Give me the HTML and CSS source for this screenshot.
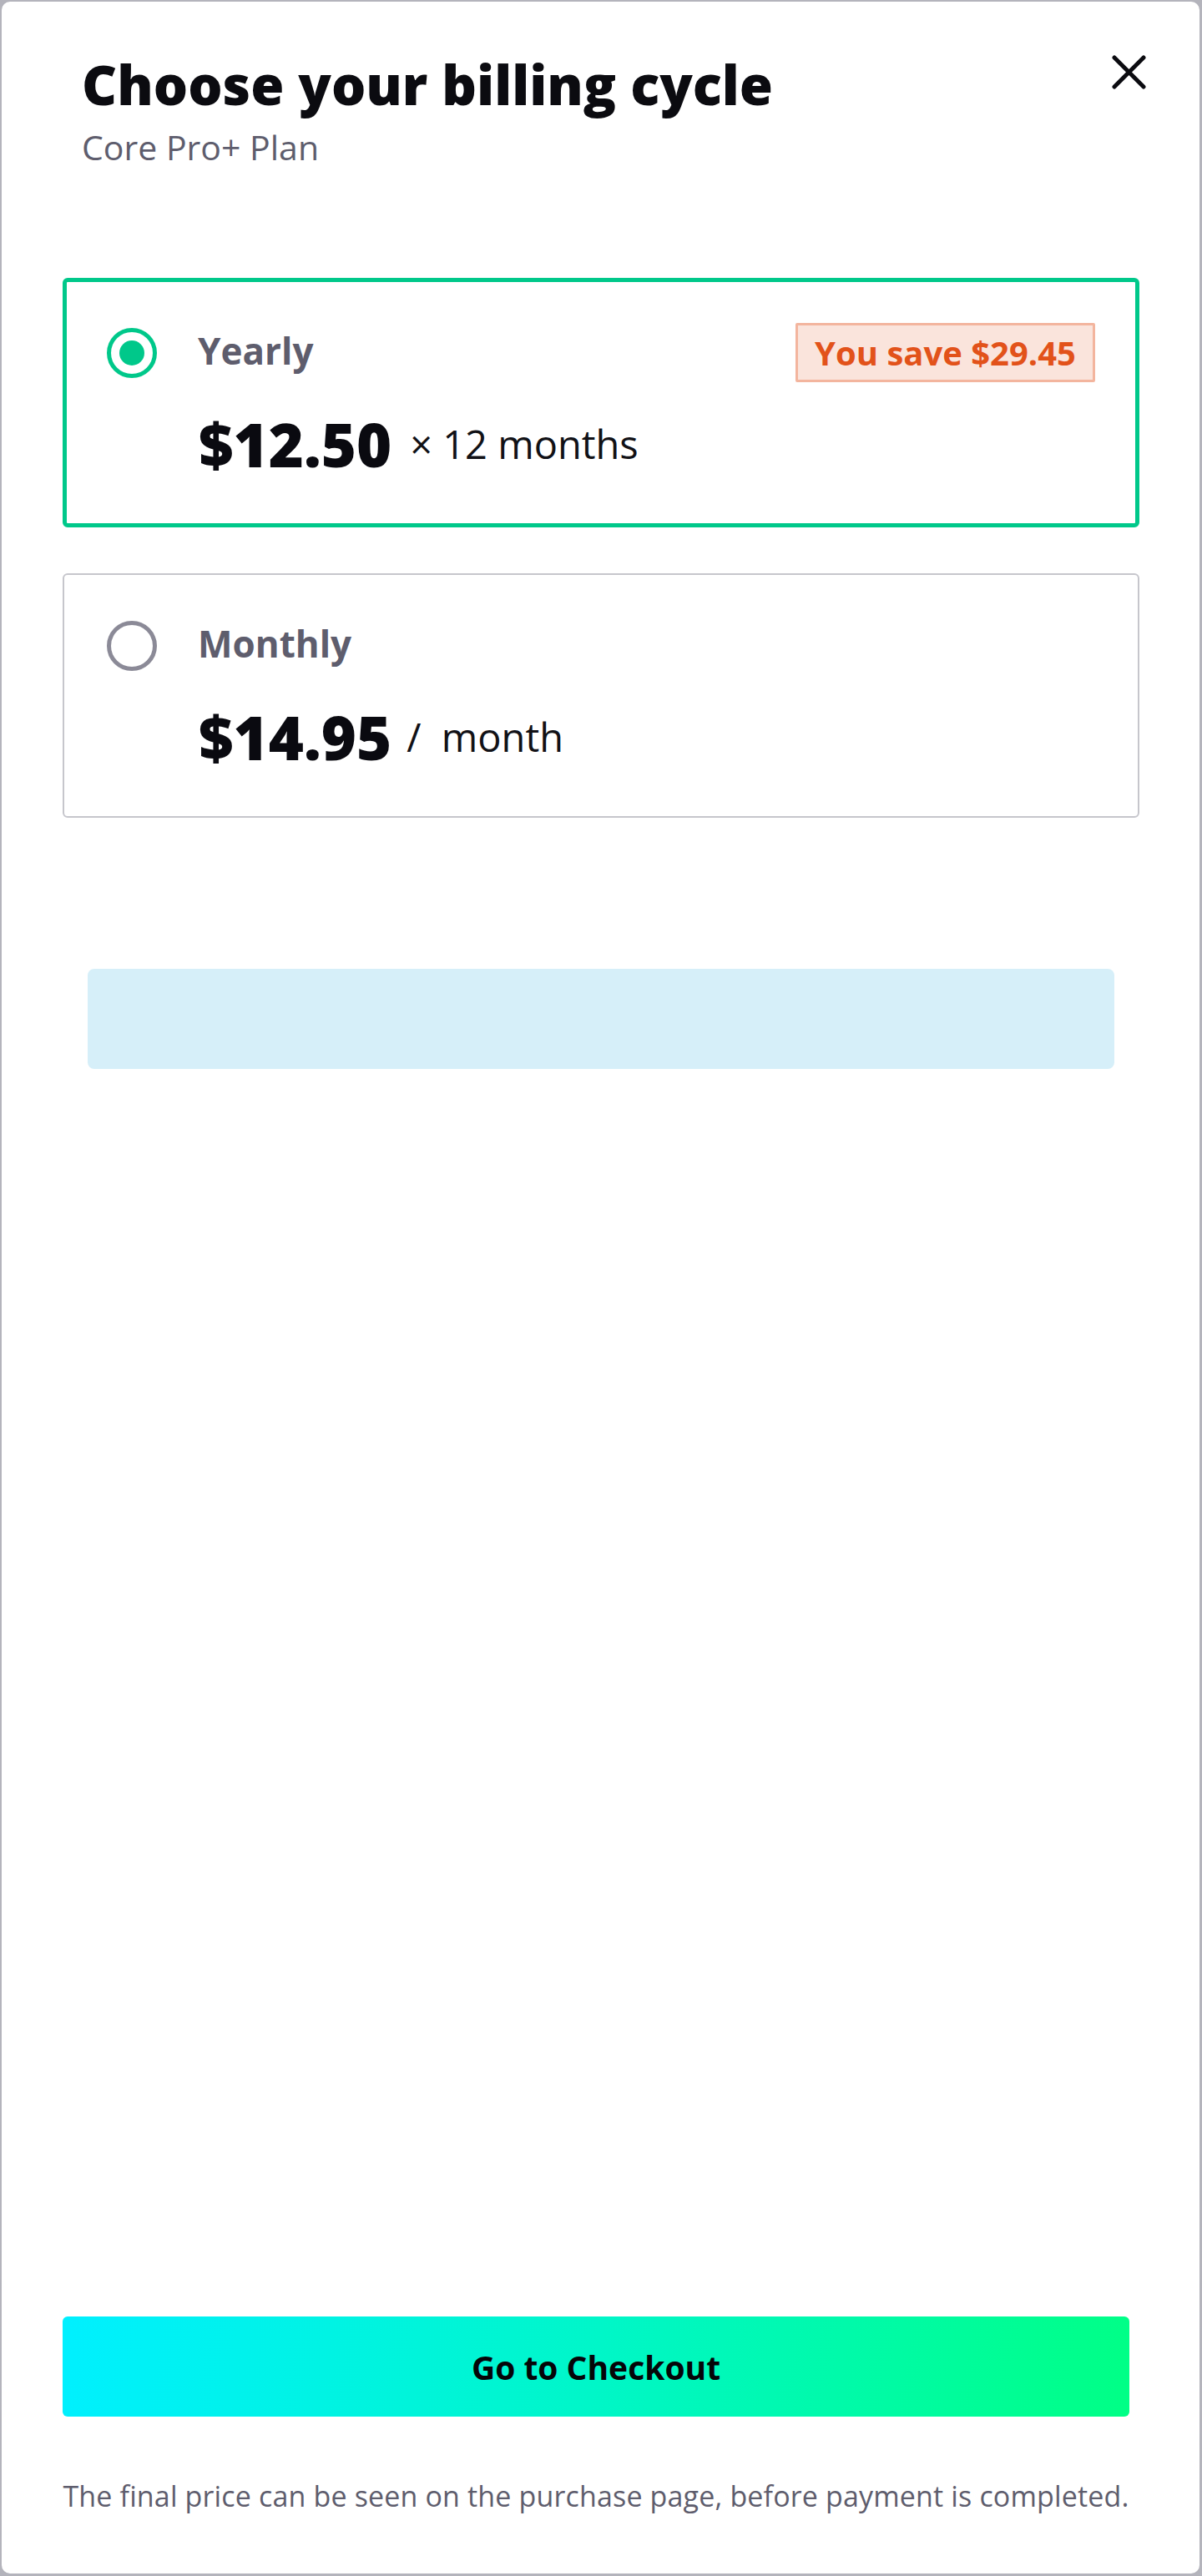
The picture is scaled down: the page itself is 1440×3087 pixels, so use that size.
FILE: index.html
```html
<!DOCTYPE html>
<html lang="en">
<head>
<meta charset="utf-8">
<title>Choose your billing cycle</title>
<link rel="stylesheet" href="styles.css">
</head>
<body>
<div class="modal">
  <header class="header">
    <div class="heading">
      <h1 class="title">Choose your billing cycle</h1>
      <p class="subtitle">Core Pro+ Plan</p>
    </div>
    <button class="close" aria-label="Close">
      <svg width="41" height="41" viewBox="0 0 41 41"><path d="M3 3 L38 38 M38 3 L3 38" stroke="#0b0b10" stroke-width="5" stroke-linecap="round" fill="none"/></svg>
    </button>
  </header>

  <div class="plans">
    <div class="card card-selected">
      <div class="card-row">
        <span class="radio radio-on"><span class="radio-dot"></span></span>
        <span class="label">Yearly</span>
        <span class="badge">You save $29.45</span>
      </div>
      <div class="price-row">
        <span class="price">$12.50</span>
        <span class="per">× 12 months</span>
      </div>
    </div>
    <div class="card card-plain">
      <div class="card-row">
        <span class="radio radio-off"></span>
        <span class="label">Monthly</span>
      </div>
      <div class="price-row">
        <span class="price">$14.95</span>
        <span class="per per-month">/&nbsp; month</span>
      </div>
    </div>
  </div>

  <div class="promo"></div>

  <footer class="footer">
    <button class="checkout">Go to Checkout</button>
    <p class="note">The final price can be seen on the purchase page, before payment is completed.</p>
  </footer>
</div>
</body>
</html>
```
FILE: styles.css
```css
* { box-sizing: border-box; }
html, body { margin: 0; padding: 0; }
body {
  background: #b4b4bc;
  font-family: "Open Sans", "Noto Sans", sans-serif;
  padding: 2px 3px 3px 2px;
}
.modal {
  background: #ffffff;
  border-radius: 10px;
  height: 3082px;
  display: flex;
  flex-direction: column;
  padding: 59px 72px 71px 73px;
}
.header {
  display: flex;
  justify-content: space-between;
  align-items: flex-start;
  padding-left: 23px;
}
.title {
  margin: 0;
  font-weight: 800;
  font-size: 65px;
  line-height: 80px;
  color: #0b0b10;
}
.subtitle {
  margin: 10px 0 0;
  font-weight: 400;
  font-size: 41px;
  line-height: 50px;
  color: #5e5d6d;
}
.close {
  width: 41px;
  height: 41px;
  margin-top: 5px;
  margin-right: -8px;
  padding: 0;
  border: none;
  background: none;
  display: block;
}
.close svg { display: block; }
.plans {
  margin-top: 132px;
  display: flex;
  flex-direction: column;
  gap: 55px;
}
.card {
  border-radius: 6px;
  padding: 49px 48px 47px 48px;
}
.card-selected { border: 5px solid #00c88a; }
.card-plain {
  border: 2px solid #c6c6cc;
  padding: 49px 51px 47px 51px;
}
.card-row {
  display: flex;
  align-items: center;
  min-height: 71px;
}
.radio {
  flex: none;
  width: 60px;
  height: 60px;
  border-radius: 50%;
  display: flex;
  align-items: center;
  justify-content: center;
}
.radio-on { border: 5px solid #00c88a; }
.radio-off { border: 5px solid #8b8a97; }
.radio-dot {
  width: 30px;
  height: 30px;
  border-radius: 50%;
  background: #00c88a;
}
.label {
  flex: 1;
  margin-left: 49px;
  font-weight: 700;
  font-size: 44px;
  line-height: 60px;
  color: #5e5d6d;
  position: relative;
  top: -3px;
}
.badge {
  flex: none;
  border: 3px solid #f3b59e;
  background: #fae4dc;
  color: #e2521a;
  font-weight: 700;
  font-size: 40px;
  line-height: 55px;
  padding: 5px 20px;
  border-radius: 2px;
}
.price-row {
  display: flex;
  align-items: center;
  margin-top: 26px;
  padding-left: 110px;
}
.price {
  font-weight: 800;
  font-size: 72px;
  line-height: 96px;
  color: #0a0a10;
}
.per {
  margin-left: 22px;
  font-weight: 400;
  font-size: 47px;
  line-height: 60px;
  color: #111116;
}
.per-month { margin-left: 18px; }
.promo {
  margin: 181px 30px 0;
  height: 120px;
  background: #d6eff9;
  border-radius: 8px;
}
.footer {
  margin-top: auto;
  padding-right: 12px;
}
.checkout {
  display: flex;
  align-items: center;
  justify-content: center;
  width: 100%;
  height: 120px;
  border: none;
  border-radius: 6px;
  background: linear-gradient(100deg, #00f0ff 0%, #00f6c8 50%, #00ff85 100%);
  font-family: "Open Sans", "Noto Sans", sans-serif;
  font-weight: 700;
  font-size: 39px;
  color: #050508;
}
.note {
  margin: 73px 0 0;
  font-weight: 400;
  font-size: 34px;
  line-height: 44px;
  letter-spacing: 0.15px;
  color: #5e5d6d;
  text-align: center;
}
```
